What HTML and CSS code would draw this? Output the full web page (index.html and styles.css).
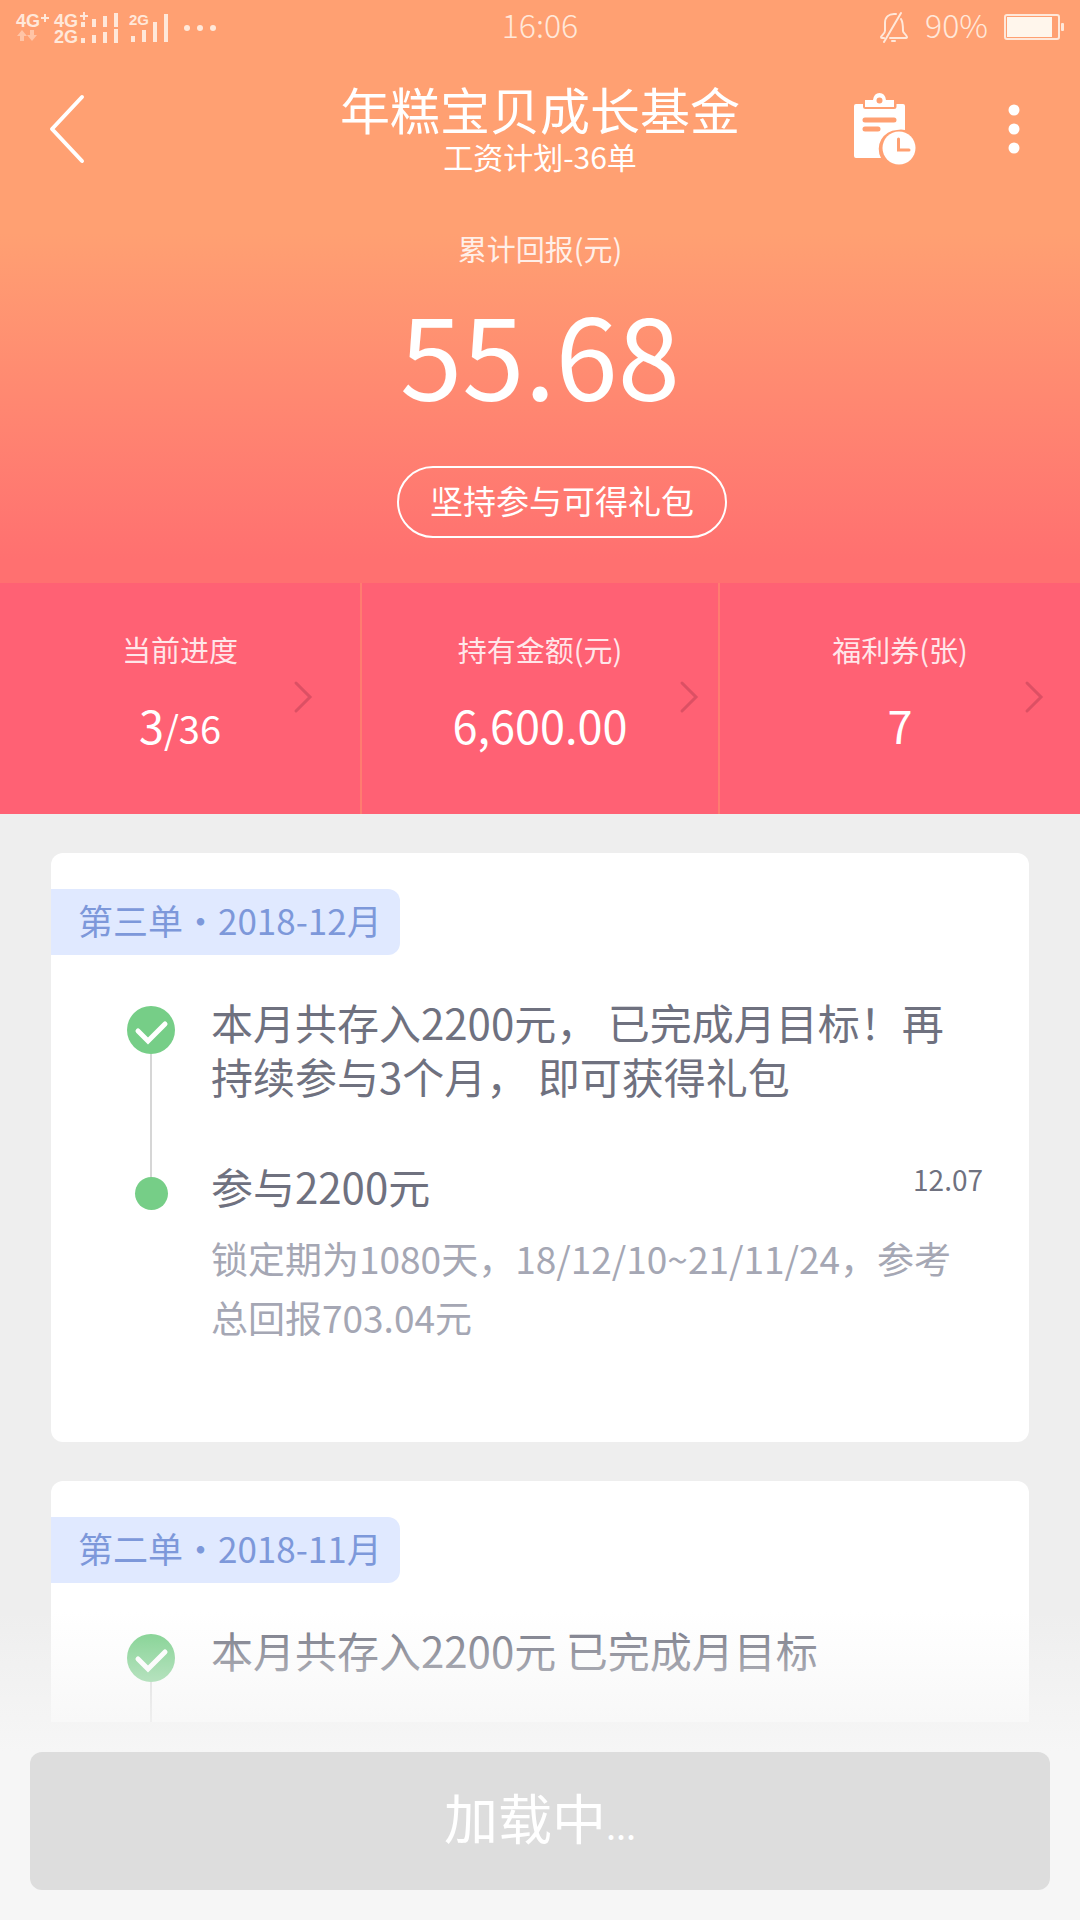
FILE: index.html
```html
<!DOCTYPE html>
<html lang="zh-CN">
<head>
<meta charset="utf-8">
<meta name="viewport" content="width=device-width, initial-scale=1">
<title>年糕宝贝成长基金</title>
<link rel="stylesheet" href="styles.css">
</head>
<body>
<div class="app">
  <header class="hero">
    <div class="status">
      <svg class="signals" width="220" height="48" viewBox="0 0 220 48" aria-hidden="true">
        <g class="signal-text">
          <text x="16" y="27" font-size="18">4G</text>
          <text x="54" y="27" font-size="18">4G</text>
          <text x="54" y="43" font-size="18">2G</text>
          <text x="129" y="25" font-size="15">2G</text>
        </g>
        <path d="M41 18h8M45 14v8M80 16h8M84 12v8" stroke="currentColor" stroke-width="2"/>
        <path opacity=".5" d="M22 30l5 6h-3v5h-4v-5h-3zM32 41l5-6h-3v-5h-4v5h-3z" fill="currentColor"/>
        <path d="M81 22h4v5h-4zM92 19h4v8h-4zM103 16h4v11h-4zM114 13h4v14h-4zM81 38h4v5h-4zM92 35h4v8h-4zM103 32h4v11h-4zM114 29h4v14h-4zM131 36h4v6h-4zM142 30h4v12h-4zM153 22h4v20h-4zM164 14h4v28h-4z" fill="currentColor"/>
        <circle cx="187" cy="28" r="3" fill="currentColor"/><circle cx="200" cy="28" r="3" fill="currentColor"/><circle cx="213" cy="28" r="3" fill="currentColor"/>
      </svg>
      <time class="clock">16:06</time>
      <div class="power">
        <svg class="bell" width="30" height="32" viewBox="0 0 30 32" fill="none" stroke="currentColor" stroke-width="2" stroke-linecap="round" aria-hidden="true">
          <path d="M6 20V12c0-6 4-9 9-9h2M22 8c2 3 2 7 2 12 0 2 3 3 4 6 0 1-1 1-2 1H11M6 20c0 2-3 4-4 6 0 1 0 1 1 1h2M5 31L22 2M13 30h3"/>
        </svg>
        <span>90%</span>
        <svg class="battery" width="60" height="28" viewBox="0 0 60 28" aria-hidden="true">
          <rect x="1" y="2" width="54" height="24" rx="2" fill="none" stroke="currentColor" stroke-width="2"/>
          <rect x="3" y="4" width="45" height="20" fill="#fff6ec"/>
          <rect x="57" y="10" width="3" height="8" rx="1" fill="currentColor"/>
        </svg>
      </div>
    </div>

    <nav class="nav">
      <button class="icon-button" type="button" aria-label="返回">
        <svg width="38" height="70" viewBox="0 0 38 70" fill="none" stroke="#fff" stroke-width="4" stroke-linecap="round" stroke-linejoin="round"><path d="M34 3L4 35l30 32"/></svg>
      </button>
      <div class="heading">
        <h1 class="title">年糕宝贝成长基金</h1>
        <p class="subtitle">工资计划-36单</p>
      </div>
      <div class="actions">
        <button class="icon-button" type="button" aria-label="计划记录">
          <svg width="62" height="72" viewBox="0 0 62 72">
            <path fill="#fff" d="M2 11H9V13.500Q9 16 11.500 16H40Q42.500 16 42.500 13.500V11H49Q51 11 51 13V37Q47 36 43 37A19 19 0 0 0 27 65H2Q0 65 0 63V13Q0 11 2 11Z"/>
            <path fill="#fff" fill-rule="evenodd" d="M11 14V7H19Q20 0 25.500 0Q31 0 32 7H40V14ZM25.500 4.500A3 3 0 1 0 25.500 10.500A3 3 0 1 0 25.500 4.500Z"/>
            <path d="M11 27h29M11 36h13" stroke="#ffa072" stroke-width="5" stroke-linecap="round"/>
            <circle cx="45" cy="55" r="16.500" fill="#fff"/>
            <path d="M44.500 46v11H55" stroke="#ffa072" stroke-width="3" fill="none" stroke-linecap="round"/>
          </svg>
        </button>
        <button class="icon-button" type="button" aria-label="更多">
          <svg width="36" height="52" viewBox="0 0 36 52" fill="#fff"><circle cx="18" cy="7" r="5.500"/><circle cx="18" cy="26" r="5.500"/><circle cx="18" cy="45" r="5.500"/></svg>
        </button>
      </div>
    </nav>

    <p class="caption total-label">累计回报(元)</p>
    <p class="total">55.68</p>
    <button class="gift" type="button">坚持参与可得礼包</button>
  </header>

  <section class="stats">
    <a class="stat" href="#progress">
      <span class="caption">当前进度</span>
      <span class="value">3<small class="value-of">/36</small></span>
      <svg class="chevron chevron-first" width="20" height="34" viewBox="0 0 20 34"><path d="M3 3l14 14L3 31"/></svg>
    </a>
    <a class="stat stat-middle" href="#amount">
      <span class="caption">持有金额(元)</span>
      <span class="value">6,600.00</span>
      <svg class="chevron chevron-middle" width="20" height="34" viewBox="0 0 20 34"><path d="M3 3l14 14L3 31"/></svg>
    </a>
    <a class="stat" href="#coupons">
      <span class="caption">福利券(张)</span>
      <span class="value">7</span>
      <svg class="chevron chevron-last" width="20" height="34" viewBox="0 0 20 34"><path d="M3 3l14 14L3 31"/></svg>
    </a>
  </section>

  <main class="orders">
    <article class="card">
      <h2 class="badge">第三单・2018-12月</h2>
      <ol class="timeline">
        <li class="step">
          <div class="rail">
            <svg width="48" height="48" viewBox="0 0 48 48"><circle cx="24" cy="24" r="24" fill="#76ce87"/><path d="M11 25l10 10 17-17" fill="none" stroke="#fff" stroke-width="5" stroke-linecap="round"/></svg>
            <span class="line"></span>
          </div>
          <p class="text">本月共存入2200元， 已完成月目标！再持续参与3个月， 即可获得礼包</p>
        </li>
        <li class="step">
          <div class="rail rail-dot"><span class="dot"></span></div>
          <div class="detail">
            <div class="row"><p class="text">参与2200元</p><time class="date">12.07</time></div>
            <p class="note">锁定期为1080天，18/12/10~21/11/24，参考总回报703.04元</p>
          </div>
        </li>
      </ol>
    </article>

    <article class="card">
      <h2 class="badge">第二单・2018-11月</h2>
      <ol class="timeline">
        <li class="step">
          <div class="rail">
            <svg width="48" height="48" viewBox="0 0 48 48"><circle cx="24" cy="24" r="24" fill="#76ce87"/><path d="M11 25l10 10 17-17" fill="none" stroke="#fff" stroke-width="5" stroke-linecap="round"/></svg>
            <span class="line"></span>
          </div>
          <p class="text">本月共存入2200元 已完成月目标</p>
        </li>
      </ol>
    </article>
  </main>

  <footer class="footer">
    <button class="submit" type="button" disabled>加载中<span class="dots">...</span></button>
  </footer>
</div>
</body>
</html>
```

FILE: styles.css
```css
* { box-sizing: border-box; }

body, h1, h2, p, ol { margin: 0; padding: 0; }

body {
  background: #eee;
  font-family: "Noto Sans CJK SC", "Noto Sans", sans-serif;
  font-weight: 400;
}

h1, h2 { font-weight: 400; }
ol { list-style: none; }
svg { display: block; }
button { font-family: inherit; cursor: pointer; }

.app {
  display: flex;
  flex-direction: column;
  height: 100vh;
}

/* Header */
.hero {
  flex: none;
  display: flex;
  flex-direction: column;
  align-items: center;
  padding-bottom: 45px;
  background: linear-gradient(#ffa072 0, #ffa072 40%, #ff7070 96%);
  color: #fff;
}

.status, .nav {
  display: grid;
  grid-template-columns: 1fr auto 1fr;
  align-items: center;
  width: 100%;
}

.status {
  height: 48px;
  color: #ffe8da;
  font-size: 32px;
  font-weight: 300;
  line-height: 48px;
}

.signal-text {
  fill: currentColor;
  font-family: "Liberation Sans", sans-serif;
  font-weight: 700;
}

.power {
  display: flex;
  justify-content: flex-end;
  align-items: center;
  gap: 16px;
  padding-right: 16px;
}

.bell, .battery { margin-top: 6px; }

.nav {
  margin-top: 30px;
  padding: 0 48px;
}

.icon-button {
  padding: 0;
  border: 0;
  background: none;
  justify-self: start;
}

.heading {
  margin-bottom: 6px;
  text-align: center;
}

.title { font-size: 50px; line-height: 60px; }
.subtitle { font-size: 30px; line-height: 36px; }

.actions {
  display: flex;
  justify-content: flex-end;
  align-items: center;
  gap: 80px;
}

.caption {
  font-size: 29px;
  line-height: 40px;
  color: rgba(255, 255, 255, 0.85);
}

.total-label { margin-top: 48px; }

.total {
  margin-top: 24px;
  font-size: 112px;
  line-height: 120px;
}

.gift {
  height: 72px;
  margin: 54px 0 0 44px;
  padding: 0 31px 4px;
  border: 2px solid #fff;
  border-radius: 36px;
  background: none;
  color: #fff;
  font-size: 33px;
  line-height: 60px;
}

/* Statistics */
.stats {
  flex: none;
  display: grid;
  grid-template-columns: repeat(3, 1fr);
  background: #ff6174;
}

.stat {
  position: relative;
  display: flex;
  flex-direction: column;
  align-items: center;
  gap: 26px;
  padding: 46px 0 59px;
  color: #fff;
  text-decoration: none;
}

.stat-middle {
  border: solid #ff7c70;
  border-width: 0 2px;
}

.value { font-size: 45px; line-height: 60px; }
.value-of { font-size: 38px; line-height: 1; }

.chevron {
  position: absolute;
  top: 97px;
  fill: none;
  stroke: #dc5064;
  stroke-width: 3;
  stroke-linecap: round;
}

.chevron-first { right: 47px; }
.chevron-middle { right: 19px; }
.chevron-last { right: 36px; }

/* Orders */
.orders {
  flex: 1;
  min-height: 0;
  overflow: hidden;
  padding: 39px 51px 0;
}

.card {
  padding: 36px 46px 95px 0;
  border-radius: 12px;
  background: #fff;
}

.card + .card { margin-top: 39px; }

.badge {
  width: fit-content;
  padding: 0 18px 4px 27px;
  border-radius: 0 12px 12px 0;
  background: #e0e9ff;
  color: #7d98da;
  font-size: 35px;
  line-height: 62px;
}

.timeline { padding: 40px 0 0 76px; }

.step { display: flex; gap: 36px; }

.rail {
  flex: none;
  display: flex;
  flex-direction: column;
  align-items: center;
  width: 48px;
  padding-top: 11px;
}

.rail-dot { padding-top: 18px; }

/* Runs on past its own step to the next dot */
.line {
  flex: 1;
  width: 2px;
  margin-bottom: -20px;
  background: #d6d6d6;
}

.text {
  color: #6f717f;
  font-size: 42px;
  line-height: 54px;
}

.step > .text { padding-bottom: 56px; }

.dot {
  z-index: 1;
  width: 33px;
  height: 33px;
  border-radius: 50%;
  background: #76ce87;
}

.detail { flex: 1; }

.row {
  display: flex;
  justify-content: space-between;
}

.date {
  color: #6f717f;
  font-size: 28px;
  line-height: 40px;
}

.note {
  margin-top: 16px;
  padding-right: 24px;
  color: #a5a7b4;
  font-size: 37px;
  line-height: 59px;
}

/* Bottom bar */
.footer {
  position: relative;
  flex: none;
  padding: 30px;
  background: linear-gradient(#eee 30px, #f6f6f6 30px);
}

/* Fades the list out above the bar */
.footer::before {
  content: "";
  position: absolute;
  inset: -110px 0 auto;
  height: 140px;
  background: linear-gradient(rgba(246, 246, 246, 0), #f6f6f6);
  pointer-events: none;
}

.submit {
  position: relative;
  display: block;
  width: 100%;
  height: 138px;
  padding: 0 0 10px;
  border: 0;
  border-radius: 12px;
  background: #ddd;
  color: #fff;
  font-size: 54px;
  cursor: default;
}

.dots { font-size: 36px; }
```
